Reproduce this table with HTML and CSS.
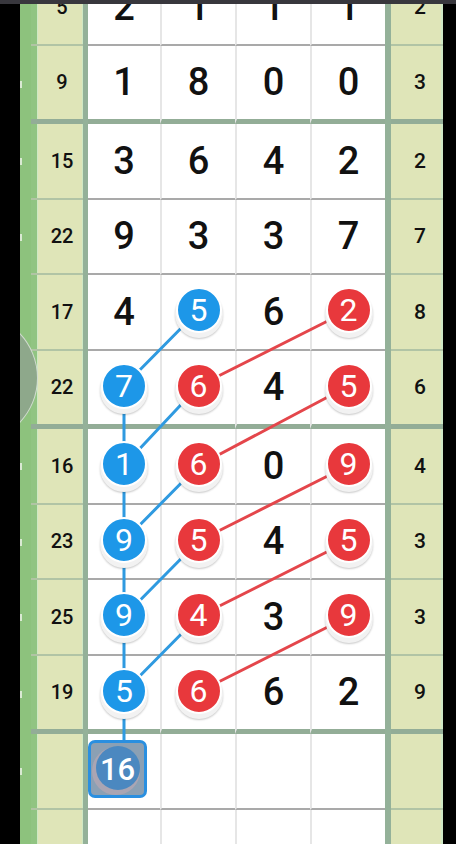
FILE: index.html
```html
<!DOCTYPE html>
<html>
<head>
<meta charset="utf-8">
<link rel="stylesheet" href="styles.css">
</head>
<body>
<div class="topbar"></div>
<div class="frame">
  <div class="board">
    <svg class="links" width="423" height="910" viewBox="0 0 423 910">
      <g class="blue-l">
        <line x1="178.5" y1="340.5" x2="104" y2="416"/>
        <line x1="104" y1="416" x2="104" y2="495.5"/>
        <line x1="104" y1="495.5" x2="178.5" y2="416"/>
        <line x1="104" y1="495.5" x2="104" y2="571"/>
        <line x1="104" y1="571" x2="178.5" y2="495.5"/>
        <line x1="104" y1="571" x2="104" y2="646.5"/>
        <line x1="104" y1="646.5" x2="178.5" y2="571"/>
        <line x1="104" y1="646.5" x2="104" y2="722"/>
        <line x1="104" y1="722" x2="178.5" y2="646.5"/>
        <line x1="104" y1="722" x2="104" y2="790"/>
      </g>
      <g class="red-l">
        <line x1="178.5" y1="416" x2="328.5" y2="340.5"/>
        <line x1="178.5" y1="495.5" x2="328.5" y2="416"/>
        <line x1="178.5" y1="571" x2="328.5" y2="495.5"/>
        <line x1="178.5" y1="646.5" x2="328.5" y2="571"/>
        <line x1="178.5" y1="722" x2="328.5" y2="646.5"/>
      </g>
    </svg>

    <div class="row thin">
      <div class="strip"></div><div class="lab">5</div><div class="vb"></div>
      <div class="cell">2</div><div class="cell sep">1</div><div class="cell sep">1</div><div class="cell sep">1</div>
      <div class="vb"></div><div class="rc">2</div>
    </div>
    <div class="row thick">
      <div class="strip"><i class="tick"></i></div><div class="lab">9</div><div class="vb"></div>
      <div class="cell">1</div><div class="cell sep">8</div><div class="cell sep">0</div><div class="cell sep">0</div>
      <div class="vb"></div><div class="rc">3</div>
    </div>
    <div class="row thin">
      <div class="strip"><i class="tick"></i></div><div class="lab">15</div><div class="vb"></div>
      <div class="cell">3</div><div class="cell sep">6</div><div class="cell sep">4</div><div class="cell sep">2</div>
      <div class="vb"></div><div class="rc">2</div>
    </div>
    <div class="row thin">
      <div class="strip"><i class="tick"></i></div><div class="lab">22</div><div class="vb"></div>
      <div class="cell">9</div><div class="cell sep">3</div><div class="cell sep">3</div><div class="cell sep">7</div>
      <div class="vb"></div><div class="rc">7</div>
    </div>
    <div class="row thin">
      <div class="strip"></div><div class="lab">17</div><div class="vb"></div>
      <div class="cell">4</div><div class="cell sep"><span class="ball blue">5</span></div><div class="cell sep">6</div><div class="cell sep"><span class="ball red">2</span></div>
      <div class="vb"></div><div class="rc">8</div>
    </div>
    <div class="row thick">
      <div class="strip"></div><div class="lab">22</div><div class="vb"></div>
      <div class="cell"><span class="ball blue">7</span></div><div class="cell sep"><span class="ball red">6</span></div><div class="cell sep">4</div><div class="cell sep"><span class="ball red">5</span></div>
      <div class="vb"></div><div class="rc">6</div>
    </div>
    <div class="row thin">
      <div class="strip"><i class="tick"></i></div><div class="lab">16</div><div class="vb"></div>
      <div class="cell"><span class="ball blue">1</span></div><div class="cell sep"><span class="ball red">6</span></div><div class="cell sep">0</div><div class="cell sep"><span class="ball red">9</span></div>
      <div class="vb"></div><div class="rc">4</div>
    </div>
    <div class="row thin">
      <div class="strip"><i class="tick"></i></div><div class="lab">23</div><div class="vb"></div>
      <div class="cell"><span class="ball blue">9</span></div><div class="cell sep"><span class="ball red">5</span></div><div class="cell sep">4</div><div class="cell sep"><span class="ball red">5</span></div>
      <div class="vb"></div><div class="rc">3</div>
    </div>
    <div class="row thin">
      <div class="strip"><i class="tick"></i></div><div class="lab">25</div><div class="vb"></div>
      <div class="cell"><span class="ball blue">9</span></div><div class="cell sep"><span class="ball red">4</span></div><div class="cell sep">3</div><div class="cell sep"><span class="ball red">9</span></div>
      <div class="vb"></div><div class="rc">3</div>
    </div>
    <div class="row thick">
      <div class="strip"><i class="tick"></i></div><div class="lab">19</div><div class="vb"></div>
      <div class="cell"><span class="ball blue">5</span></div><div class="cell sep"><span class="ball red">6</span></div><div class="cell sep">6</div><div class="cell sep">2</div>
      <div class="vb"></div><div class="rc">9</div>
    </div>
    <div class="row thin">
      <div class="strip"><i class="tick"></i></div><div class="lab"></div><div class="vb"></div>
      <div class="cell sqcell"><span class="sq16"><span class="sqnum">16</span></span></div><div class="cell sep"></div><div class="cell sep"></div><div class="cell sep"></div>
      <div class="vb"></div><div class="rc"></div>
    </div>
    <div class="row thin">
      <div class="strip"></div><div class="lab"></div><div class="vb"></div>
      <div class="cell"></div><div class="cell sep"></div><div class="cell sep"></div><div class="cell sep"></div>
      <div class="vb"></div><div class="rc"></div>
    </div>
  </div>
  <div class="handle"></div>
</div>
</body>
</html>
```

FILE: styles.css
```css
html, body {
  margin: 0;
  padding: 0;
  background: #000;
  height: 844px;
  overflow: hidden;
}
body {
  font-family: Roboto, "Noto Sans", "Liberation Sans", sans-serif;
}
.topbar {
  position: fixed;
  top: 0;
  left: 0;
  right: 0;
  height: 4px;
  background: #38373d;
  z-index: 10;
}
.frame {
  position: relative;
  margin-left: 20px;
  width: 423px;
  height: 844px;
  overflow: hidden;
}
.board {
  position: relative;
  margin-top: -30px;
}
.links {
  position: absolute;
  top: 0;
  left: 0;
  z-index: 1;
}
.links line {
  stroke-width: 3;
  stroke-linecap: round;
}
.blue-l line { stroke: #2f9ae0; }
.red-l line { stroke: #e4464b; }

.row {
  display: grid;
  grid-template-columns: 11px 52px 5px 72px 75px 75px 75px 6px 52px;
}
.strip {
  background: #8dc27d;
  display: flex;
  align-items: center;
}
.tick {
  display: block;
  width: 2px;
  height: 7px;
  background: #eef3e8;
  opacity: 0.8;
}
.lab, .cell, .rc {
  height: 73.5px;
  display: flex;
  align-items: center;
  justify-content: center;
  color: #111;
}
.lab {
  background: linear-gradient(to right, #91c482 0 6px, #cfe8c4 6px 7px, #dfe5b8 7px 51px, #cfe8c4 51px);
  padding-left: 10px;
  box-sizing: content-box;
  width: 42px;
  font-size: 20px;
  font-weight: 500;
}
.rc {
  background: linear-gradient(to right, #dfe5b8 0 50px, #cfe8c4 50px);
  padding-left: 6px;
  width: 46px;
  font-size: 21px;
  font-weight: 500;
}
.vb {
  background: #94b199;
}
.cell {
  background: #fff;
  font-size: 38px;
  font-weight: 500;
  box-sizing: content-box;
}
.cell.sep {
  border-left: 2px solid #e6e6e6;
}
.row.thin .cell { border-bottom: 2px solid #a9a9a9; }
.row.thin .lab, .row.thin .rc { border-bottom: 2px solid #b1c4a5; }
.row.thick .cell, .row.thick .lab, .row.thick .rc { border-bottom: 5px solid #93ad97; }

.ball {
  position: relative;
  z-index: 2;
  width: 42px;
  height: 42px;
  margin-top: -3px;
  border: 2px solid #fff;
  border-radius: 50%;
  display: flex;
  align-items: center;
  justify-content: center;
  color: #fff;
  font-size: 32px;
  font-weight: 400;
  box-shadow: 0 4px 0 1px #f2f2f2, 0 5px 2px 1px rgba(0, 0, 0, 0.22);
}
.ball.blue { background: #1d97e8; }
.ball.red { background: #e8383c; }

.cell.sqcell {
  justify-content: flex-start;
  align-items: flex-start;
}
.sq16 {
  position: relative;
  z-index: 2;
  margin-top: 6px;
  width: 53px;
  height: 52px;
  border: 3px solid #2a8fe0;
  border-radius: 7px;
  background: #8ba0b4;
  display: flex;
  align-items: center;
  justify-content: center;
  overflow: hidden;
}
.sq16::before {
  content: "";
  position: absolute;
  width: 44px;
  height: 44px;
  border-radius: 50%;
  background: #4b88c0;
  left: 5px;
  top: 3px;
  box-shadow: -2px 3px 0 2px rgba(196, 170, 178, 0.55);
}
.sqnum {
  position: relative;
  color: #fff;
  font-size: 31px;
}
.handle {
  position: absolute;
  left: -112px;
  top: 313px;
  width: 130px;
  height: 130px;
  border-radius: 50%;
  background: #8ea88b;
  border: 1px solid rgba(255, 255, 255, 0.6);
  box-sizing: border-box;
  z-index: 5;
}
```
